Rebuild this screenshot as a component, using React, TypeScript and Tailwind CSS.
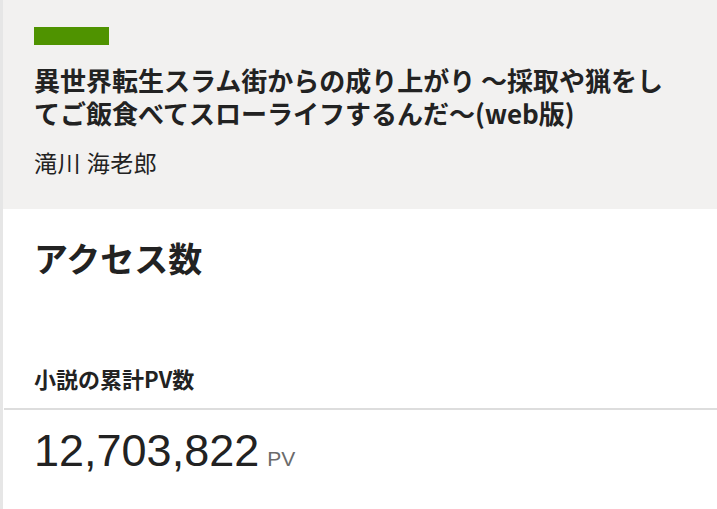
const jp = "font-['Noto_Sans_CJK_JP','Noto_Sans',sans-serif]";

function Header() {
  return (
    <div className="bg-[#f2f1f0] pl-[31px] pr-[31px] pt-[27px] pb-[32px]">
      <div className="h-[18px] w-[75px] bg-[#4f9300]" />
      <h1 className={`${jp} mt-[18px] text-[26px] leading-[33px] font-bold text-[#222]`}>
        異世界転生スラム街からの成り上がり ～採取や猟をしてご飯食べてスローライフするんだ～(web版)
      </h1>
      <p className={`${jp} mt-[18px] text-[23px] leading-[30px] tracking-[0.5px] text-[#222]`}>滝川 海老郎</p>
    </div>
  );
}

export default function App() {
  return (
    <div className="min-h-screen bg-white border-l-[3px] border-[#e6e6e6]">
      <Header />
      <section className="pt-[29px]">
        <h2 className={`${jp} pl-[31px] text-[34px] leading-[40px] font-bold text-[#222]`}>アクセス数</h2>
        <h3 className={`${jp} pl-[31px] mt-[86px] pb-[16px] text-[22px] leading-[28px] font-bold text-[#222]`}>
          小説の累計PV数
        </h3>
        <div className="ml-px border-t-2 border-[#dddddd]" />
        <div className="pl-[31px] mt-[16px] flex items-baseline gap-[8px] font-['Liberation_Sans',Arial,sans-serif]">
          <span className="text-[45px] leading-[50px] text-[#222]">12,703,822</span>
          <span className="text-[21px] leading-[24px] text-[#6b6b6b]">PV</span>
        </div>
      </section>
    </div>
  );
}
